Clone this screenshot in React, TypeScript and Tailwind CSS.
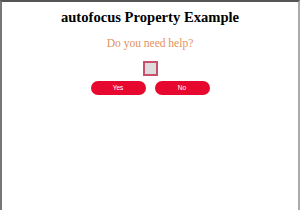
export default function App() {
  return (
    <div className="h-[210px] w-[300px] overflow-hidden bg-white">
      <div className="h-[230px] border-t-2 border-l-2 border-r-2 border-t-[#555] border-l-[#777] border-r-[#aaa] bg-white">
        <div className="flex flex-col items-center pt-[6px]">
          <h1 className="text-[14.6px] font-bold leading-[18px] text-black" style={{ fontFamily: '"Liberation Serif", serif' }}>
            autofocus Property Example
          </h1>
          <p className="mt-[10px] text-[11.5px] leading-[14px] text-[#e3925a]" style={{ fontFamily: '"Liberation Serif", serif' }}>
            Do you need help?
          </p>
          <div className="mt-[11px] h-[15px] w-[15px] border-2 border-[#c8506a] bg-[#dcdcdc]" />
          <div className="mt-[5px] flex gap-[9px]">
            <button className="h-[14px] w-[55px] rounded-full bg-[#e8072e] text-[6.5px] leading-[14px] text-white" style={{ fontFamily: '"Liberation Sans", sans-serif' }}>
              Yes
            </button>
            <button className="h-[14px] w-[55px] rounded-full bg-[#e8072e] text-[6.5px] leading-[14px] text-white" style={{ fontFamily: '"Liberation Sans", sans-serif' }}>
              No
            </button>
          </div>
        </div>
      </div>
    </div>
  )
}
